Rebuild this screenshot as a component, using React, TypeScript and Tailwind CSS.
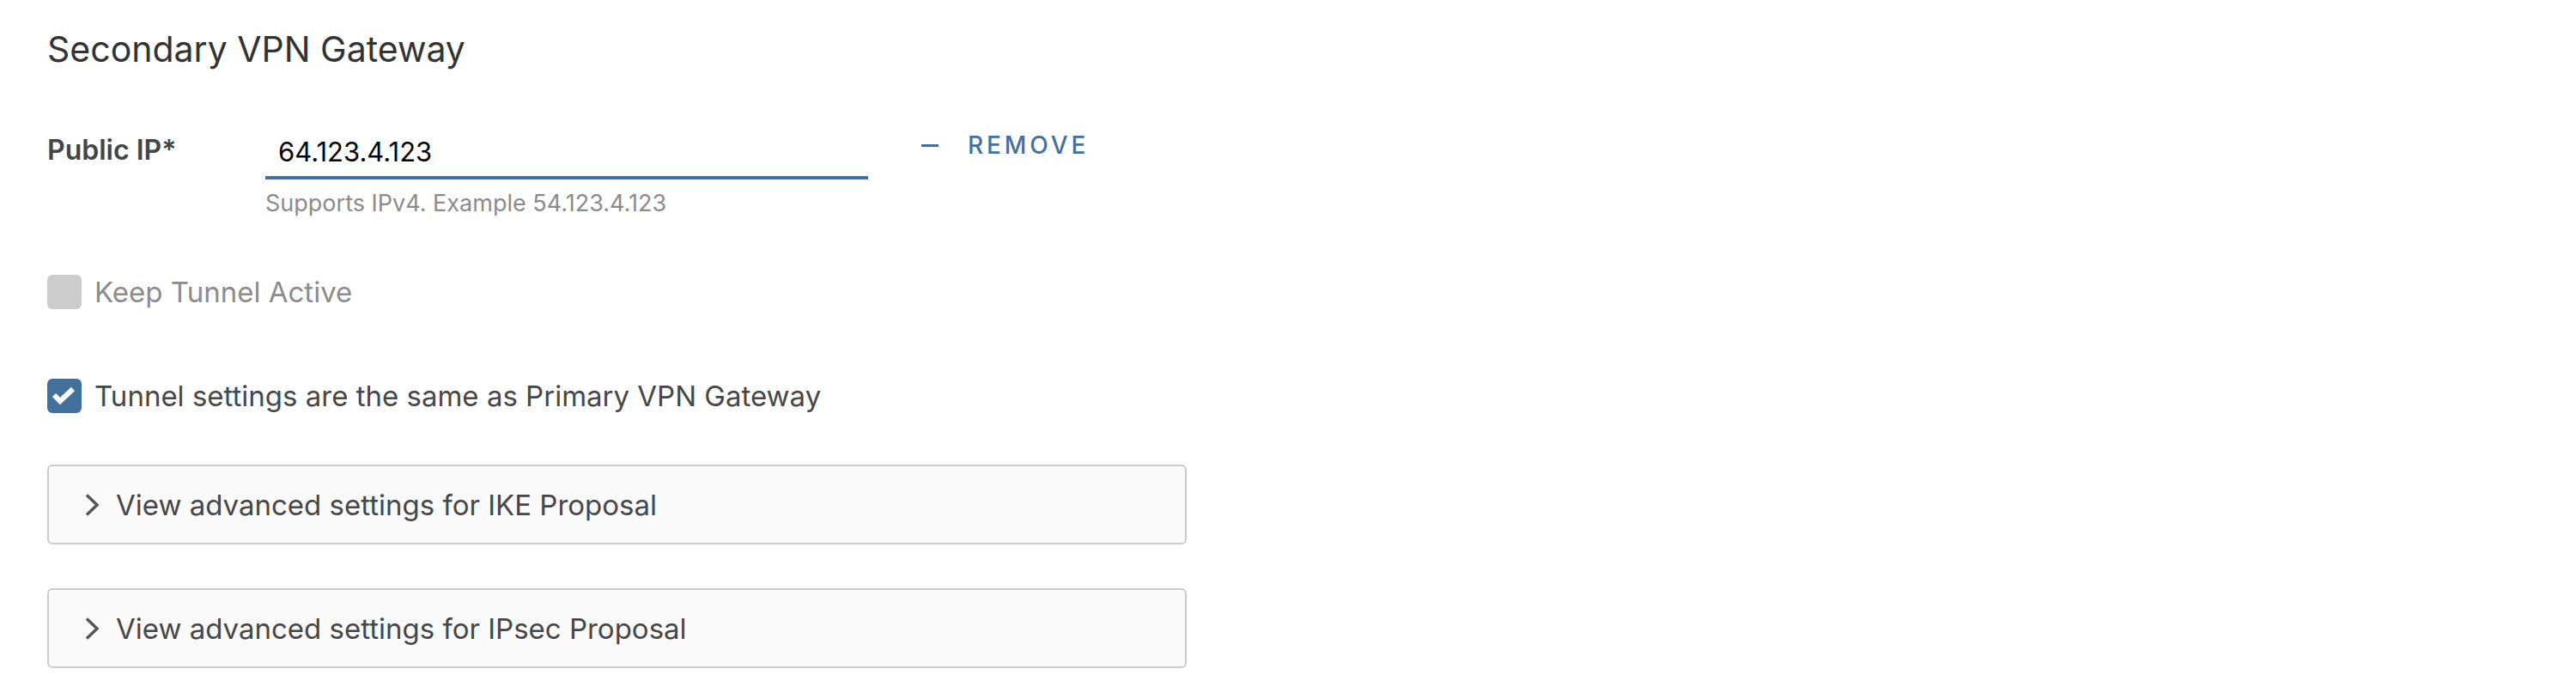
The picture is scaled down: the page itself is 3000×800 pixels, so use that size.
import { useState } from 'react';

const Chevron = () => (
  <svg width="18" height="28" viewBox="0 0 18 28" className="shrink-0">
    <path d="M3 2.5 L15 14 L3 25.5" fill="none" stroke="#565656" strokeWidth="3.5" />
  </svg>
);

const Accordion = ({ title }: { title: string }) => (
  <div className="flex h-[93px] w-[1327px] items-center rounded-[6px] border-2 border-[#cccccc] bg-[#fafafa] pl-[41px]">
    <Chevron />
    <span className="ml-[19px] text-[33px] leading-[40px] text-[#474747]">{title}</span>
  </div>
);

const Checkbox = ({ checked, disabled, label }: { checked: boolean; disabled?: boolean; label: string }) => (
  <div className="flex h-[40px] items-center">
    <div
      className={
        checked
          ? 'flex h-[40px] w-[40px] items-center justify-center rounded-[6px] bg-[#44709e]'
          : disabled
          ? 'h-[40px] w-[40px] rounded-[6px] bg-[#cccccc]'
          : 'h-[40px] w-[40px] rounded-[6px] border-2 border-[#999999] bg-white'
      }
    >
      {checked && (
        <svg width="40" height="40" viewBox="0 0 40 40">
          <polyline points="8,19 15,26 30,12" fill="none" stroke="#ffffff" strokeWidth="6" />
        </svg>
      )}
    </div>
    <span className={`ml-[15px] text-[33px] leading-[40px] ${disabled ? 'text-[#8c8c8c]' : 'text-[#474747]'}`}>
      {label}
    </span>
  </div>
);

export default function App() {
  const [ip] = useState('64.123.4.123');

  return (
    <div className="h-[800px] w-full bg-white pl-[55px] font-['Inter',sans-serif]">
      <h3 className="pt-[33px] text-[41px] font-normal leading-[48px] text-[#333333]">Secondary VPN Gateway</h3>

      {/* Public IP */}
      <div className="mt-[74px] flex items-start">
        <label className="w-[254px] shrink-0 text-[32px] font-semibold leading-[40px] text-[#454545]">Public IP*</label>
        <div className="w-[702px] shrink-0">
          <div className="mt-[2px] border-b-4 border-[#44709e] pb-[8px] pl-[15px] text-[31px] leading-[40px] text-black">
            {ip}
          </div>
          <p className="mt-[12px] text-[27px] leading-[32px] text-[#8c8c8c]">Supports IPv4. Example 54.123.4.123</p>
        </div>
        <button className="-mt-[4px] ml-[62px] flex h-[36px] items-center text-[#44709e]">
          <span className="h-[3px] w-[20px] bg-[#44709e]" />
          <span className="ml-[34px] text-[28px] font-medium uppercase leading-[36px] tracking-[0.14em]">Remove</span>
        </button>
      </div>

      <div className="mt-[67px]">
        <Checkbox checked={false} disabled label="Keep Tunnel Active" />
      </div>

      <div className="mt-[81px]">
        <Checkbox checked label="Tunnel settings are the same as Primary VPN Gateway" />
      </div>

      <div className="mt-[60px]">
        <Accordion title="View advanced settings for IKE Proposal" />
      </div>
      <div className="mt-[51px]">
        <Accordion title="View advanced settings for IPsec Proposal" />
      </div>
    </div>
  );
}
